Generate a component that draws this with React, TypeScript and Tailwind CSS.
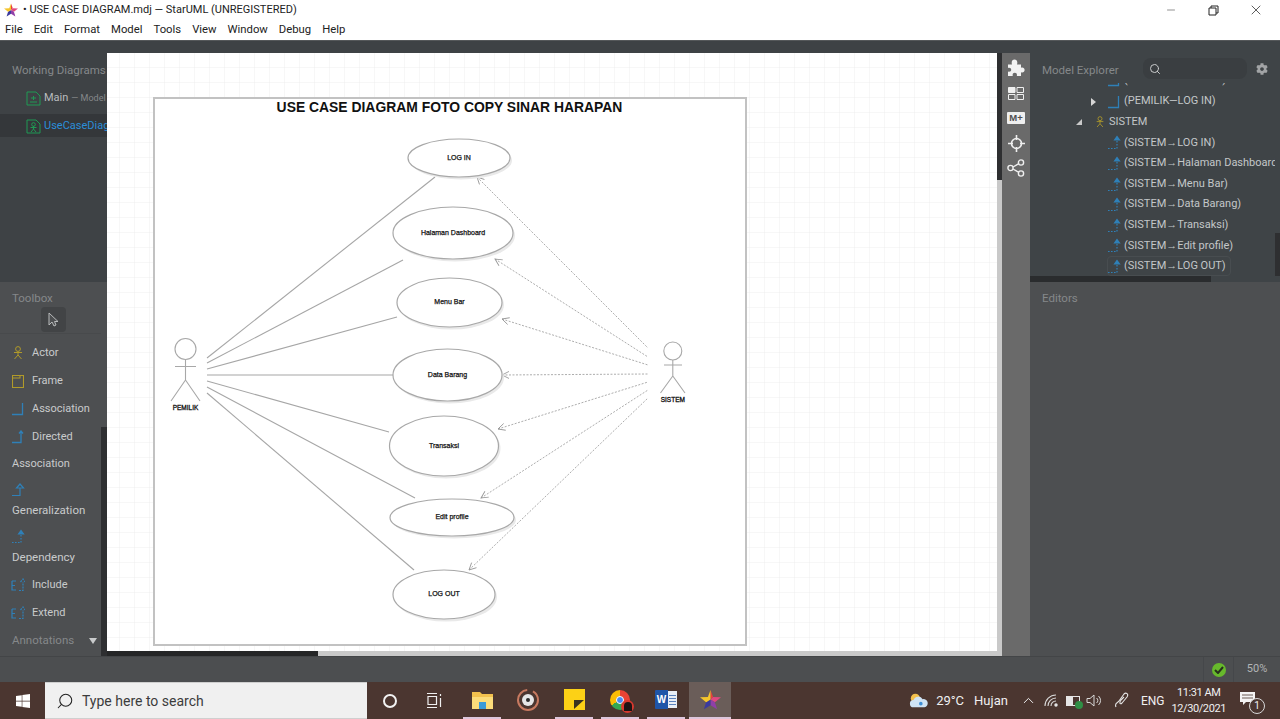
import { ChevronUp, Minus, Search, X } from "lucide-react";
import { FaCog, FaWindows } from "react-icons/fa";

const uiFont = "font-['Roboto','Noto_Sans',sans-serif]";
const panelFont = "font-['Roboto','Noto_Sans',sans-serif]";
const diagramFont = "'Liberation Sans', Arial, sans-serif";

const menuItems = ["File", "Edit", "Format", "Model", "Tools", "View", "Window", "Debug", "Help"];

const useCases = [
  { label: "LOG IN", cx: 459, cy: 158, rx: 51, ry: 19 },
  { label: "Halaman Dashboard", cx: 453, cy: 233, rx: 60, ry: 26 },
  { label: "Menu Bar", cx: 449.5, cy: 302.5, rx: 52.5, ry: 24.5 },
  { label: "Data Barang", cx: 447.5, cy: 375, rx: 54.5, ry: 26 },
  { label: "Transaksi", cx: 444, cy: 446, rx: 54.5, ry: 30 },
  { label: "Edit profile", cx: 452, cy: 517.5, rx: 62, ry: 18.5 },
  { label: "LOG OUT", cx: 444, cy: 594.5, rx: 51, ry: 24.5 },
];

const solidLines = [
  [207, 358, 435, 177],
  [207, 363, 403, 260],
  [207, 369, 397, 317],
  [207, 375, 393, 375],
  [207, 381, 389, 432],
  [207, 387, 415, 498],
  [207, 393, 414, 570],
];

const dashedLines = [
  [648, 348, 477, 177],
  [648, 357, 495, 259],
  [648, 365, 502, 319],
  [648, 374, 502, 375],
  [648, 382, 498, 429],
  [648, 390, 481, 498],
  [648, 398, 469, 570],
];

const sistemRows = [
  "(SISTEM→LOG IN)",
  "(SISTEM→Halaman Dashboard)",
  "(SISTEM→Menu Bar)",
  "(SISTEM→Data Barang)",
  "(SISTEM→Transaksi)",
  "(SISTEM→Edit profile)",
];

const StarLogo = ({ size = 14 }: { size?: number }) => (
  <svg width={size} height={size} viewBox="0 0 24 24" className="shrink-0">
    <path d="M12 1 L15 9 L12 12 Z" fill="#e8413c" />
    <path d="M15 9 L24 9.5 L17 15 L12 12 Z" fill="#e0497f" />
    <path d="M17 15 L19.5 23 L12 18.5 L12 12 Z" fill="#8f3fa8" />
    <path d="M12 18.5 L4.5 23 L7 15 L12 12 Z" fill="#3b3a9e" />
    <path d="M7 15 L0 9.5 L9 9 L12 1 L12 12 Z" fill="#f5c52c" />
  </svg>
);

const ActorIcon = ({ size = 12 }: { size?: number }) => (
  <svg width={size} height={size + 2} viewBox="0 0 12 14" fill="none" stroke="#b09a2a" strokeWidth="1" className="shrink-0">
    <circle cx="6" cy="3" r="2.4" />
    <path d="M2 6.5 H10 M6 5.5 V9 M6 9 L2.5 13 M6 9 L9.5 13" />
  </svg>
);

const AssocIcon = () => (
  <svg width="12" height="14" viewBox="0 0 12 14" fill="none" stroke="#2f80b8" strokeWidth="1.3" className="shrink-0">
    <path d="M0 12.5 H10.5 V1" />
  </svg>
);

const DirectedIcon = () => (
  <svg width="12" height="14" viewBox="0 0 12 14" fill="none" stroke="#2f80b8" strokeWidth="1.3" className="shrink-0">
    <path d="M0 12.5 H9 V1.5 M7 3.5 L9 1 L11 3.5" />
  </svg>
);

const GenIcon = () => (
  <svg width="15" height="14" viewBox="0 0 15 14" fill="none" stroke="#2f80b8" strokeWidth="1.2" className="shrink-0">
    <path d="M0 12.5 H8 V5 M4.5 5 L8 1 L11.5 5 Z" />
  </svg>
);

const DepIcon = () => (
  <svg width="14" height="15" viewBox="0 0 14 15" fill="none" stroke="#2f80b8" strokeWidth="1.2" className="shrink-0">
    <path d="M0 13.5 H9 V5" strokeDasharray="1.6 1.4" />
    <path d="M6.5 5 L9 1.5 L11.5 5 Z" fill="#2f80b8" />
  </svg>
);

const IncludeIcon = () => (
  <svg width="14" height="14" viewBox="0 0 14 14" fill="none" stroke="#2f80b8" strokeWidth="1.2" className="shrink-0">
    <path d="M1 3 H5 M1 3 V12 H5 M1 7.5 H4" />
    <path d="M8 12.5 H12 V4 M9.5 4 L12 1 L14 4" strokeDasharray="2 1" />
  </svg>
);

const TreeRow = ({ text, active }: { text: string; active?: boolean }) => (
  <div className="h-[20.6px] flex items-center pl-[78px]">
    <div className={`flex items-center gap-[2px] pr-1 whitespace-nowrap h-[20px] ${active ? "border border-[#484d50] rounded-sm -ml-px" : ""}`}>
      <DepIcon />
      <span className="text-[11px] text-[#c3c7c9]">{text}</span>
    </div>
  </div>
);

const ToolItem = ({ icon, label }: { icon: React.ReactNode; label: string }) => (
  <div className="h-[28px] flex items-center gap-[8px] pl-3">
    <span className="w-[12px] flex justify-center">{icon}</span>
    <span className="text-[11px] text-[#c9cbcc]">{label}</span>
  </div>
);

const Diagram = () => (
  <svg viewBox="107 53 890 598" className="w-[890px] h-[598px] block bg-white shrink-0">
    <defs>
      <pattern id="grid" x="105" y="53" width="15" height="15" patternUnits="userSpaceOnUse">
        <path d="M15 0 V15 M0 15 H15" stroke="#eeeeee" strokeWidth="1" fill="none" />
      </pattern>
      <marker id="open" markerWidth="9" markerHeight="9" refX="1" refY="4.5" orient="auto">
        <path d="M8 1 L1 4.5 L8 8" fill="none" stroke="#999999" strokeWidth="0.9" />
      </marker>
    </defs>
    <rect x="107" y="53" width="890" height="598" fill="url(#grid)" />
    <rect x="154" y="98" width="592" height="547" fill="#ffffff" stroke="#c2c2c2" strokeWidth="2" />
    <text x="449.5" y="112" textAnchor="middle" fontFamily={diagramFont} fontSize="13.9" fontWeight="700" fill="#111111">
      USE CASE DIAGRAM FOTO COPY SINAR HARAPAN
    </text>

    {solidLines.map(([x1, y1, x2, y2]) => (
      <line key={y1} x1={x1} y1={y1} x2={x2} y2={y2} stroke="#a6a6a6" strokeWidth="1.1" />
    ))}
    {dashedLines.map(([x1, y1, x2, y2]) => (
      <line
        key={y1}
        x1={x2}
        y1={y2}
        x2={x1}
        y2={y1}
        stroke="#adadad"
        strokeWidth="1"
        strokeDasharray="2 1.5"
        markerStart="url(#open)"
      />
    ))}

    {useCases.map((u) => (
      <g key={u.label}>
        <ellipse cx={u.cx + 2} cy={u.cy + 2.5} rx={u.rx} ry={u.ry} fill="#e9e9e9" />
        <ellipse cx={u.cx} cy={u.cy} rx={u.rx} ry={u.ry} fill="#ffffff" stroke="#a8a8a8" strokeWidth="1.2" />
        <text
          x={u.cx}
          y={u.cy + 1.5}
          textAnchor="middle"
          fontFamily={diagramFont}
          fontSize="7"
          fill="#111111"
          stroke="#111111"
          strokeWidth="0.25"
        >
          {u.label}
        </text>
      </g>
    ))}

    <g fill="none" stroke="#a8a8a8" strokeWidth="1.1">
      <circle cx="185.5" cy="349" r="10.5" />
      <path d="M175 366.5 H196 M185.5 359.5 V380 M185.5 380 L171 401 M185.5 380 L200 401" />
      <circle cx="672.8" cy="351" r="9" />
      <path d="M664 365 H682 M672.8 360 V376 M672.8 376 L660.5 393 M672.8 376 L685 393" />
    </g>
    <text x="185.5" y="409.5" textAnchor="middle" fontFamily={diagramFont} fontSize="6.5" fill="#111111" stroke="#111111" strokeWidth="0.3">
      PEMILIK
    </text>
    <text x="672.8" y="401.5" textAnchor="middle" fontFamily={diagramFont} fontSize="6.5" fill="#111111" stroke="#111111" strokeWidth="0.3">
      SISTEM
    </text>
  </svg>
);

const TitleBar = () => (
  <div className={`h-[20px] bg-white flex items-center ${uiFont}`}>
    <div className="pl-[4px] pr-[5px]">
      <StarLogo />
    </div>
    <span className="text-[11px] text-[#222222] whitespace-nowrap">• USE CASE DIAGRAM.mdj — StarUML (UNREGISTERED)</span>
    <div className="ml-auto mr-[2px] flex items-center text-[#222222]">
      <div className="w-[42px] flex justify-center">
        <Minus size={12} strokeWidth={1} />
      </div>
      <div className="w-[42px] flex justify-center">
        <svg width="11" height="11" viewBox="0 0 11 11" fill="none" stroke="#222222">
          <path d="M1 3 H8 V10 H1 Z M3 3 V1 H10 V8 H8" />
        </svg>
      </div>
      <div className="w-[44px] flex justify-center">
        <X size={16} strokeWidth={1.1} />
      </div>
    </div>
  </div>
);

const MenuBar = () => (
  <div className={`h-[20px] bg-white flex items-center gap-[11px] pl-[5px] ${uiFont}`}>
    {menuItems.map((item) => (
      <span key={item} className="text-[11.3px] text-[#222222]">
        {item}
      </span>
    ))}
  </div>
);

const LeftPanel = () => (
  <div className={`w-[107px] flex flex-col shrink-0 overflow-hidden ${panelFont}`}>
    <div className="h-[242px] bg-[#3e4245] border-t border-[#55585a] whitespace-nowrap">
      <div className="pl-3 pt-[21px] text-[11.5px] text-[#85888a] h-[46px]">Working Diagrams</div>
      <div className="h-[27px] pb-[4px] flex items-center gap-[3px] pl-[26px]">
        <svg width="15" height="15" viewBox="0 0 15 15" fill="none" stroke="#1f9a54" strokeWidth="1" className="shrink-0">
          <path d="M1 1 H10 L14 5 V14 H1 Z M4 11 H11 M7.5 5 V9 M5 7 H10" />
        </svg>
        <span className="text-[11px] text-[#b9bcbe]">Main</span>
        <span className="text-[9px] text-[#85888a]">— Model</span>
      </div>
      <div className="h-[23px] pt-px flex items-center gap-[3px] pl-[26px] bg-[#34373a]">
        <svg width="15" height="15" viewBox="0 0 15 15" fill="none" stroke="#1f9a54" strokeWidth="1" className="shrink-0">
          <path d="M1 1 H10 L14 5 V14 H1 Z" />
          <circle cx="7.5" cy="5.5" r="1.8" />
          <path d="M4.5 8.5 H10.5 M7.5 7 V10 L5 13 M7.5 10 L10 13" />
        </svg>
        <span className="text-[11px] text-[#2b8ed8]">UseCaseDiagram</span>
      </div>
    </div>
    <div className="flex-1 bg-[#4d4f51] flex min-h-0">
      <div className="flex-1 min-w-0 whitespace-nowrap">
        <div className="pl-3 pt-[8px] text-[11.5px] text-[#85888a] h-[24px]">Toolbox</div>
        <div className="h-[28px] flex items-center pl-[41px] border-b border-[#484a4c]">
          <div className="w-[25px] h-[25px] rounded bg-[#424446] flex items-center justify-center">
            <svg width="14" height="16" viewBox="0 0 14 16" fill="#4d4f51" stroke="#b8babb" strokeWidth="1">
              <path d="M2 1 V13 L5 10 L7 14 L9 13 L7.5 9.5 H11 Z" />
            </svg>
          </div>
        </div>
        <div className="pt-[5px]">
          <ToolItem icon={<ActorIcon />} label="Actor" />
          <ToolItem
            icon={
              <svg width="12" height="13" viewBox="0 0 12 13" fill="none" stroke="#b09a2a" strokeWidth="1.1">
                <path d="M0.5 0.5 H11.5 V12.5 H0.5 Z M0.5 3 H8 V0.5" />
              </svg>
            }
            label="Frame"
          />
          <ToolItem icon={<AssocIcon />} label="Association" />
          <ToolItem icon={<DirectedIcon />} label="Directed" />
          <div className="h-[26px] pl-3 flex items-center text-[11px] text-[#c9cbcc]">Association</div>
          <div className="h-[20px] pl-3 flex items-end">
            <GenIcon />
          </div>
          <div className="h-[27px] pl-3 flex items-center text-[11.5px] text-[#c9cbcc]">Generalization</div>
          <div className="h-[20px] pl-3 flex items-end">
            <DepIcon />
          </div>
          <div className="h-[27px] pl-3 flex items-center text-[11.5px] text-[#c9cbcc]">Dependency</div>
          <ToolItem icon={<IncludeIcon />} label="Include" />
          <ToolItem icon={<IncludeIcon />} label="Extend" />
          <div className="h-[28px] pl-3 pr-[4px] flex items-center justify-between">
            <span className="text-[11.5px] text-[#85888a]">Annotations</span>
            <span className="w-0 h-0 border-x-[4px] border-x-transparent border-t-[6px] border-t-[#c9cbcc]" />
          </div>
        </div>
      </div>
      <div className="w-[6px] flex flex-col">
        <div className="h-[145px]" />
        <div className="flex-1 bg-[#2e2f31]" />
      </div>
    </div>
  </div>
);

const CenterPane = () => (
  <div className="w-[895px] shrink-0 flex flex-col bg-[#3e4245] border-t border-[#55585a]">
    <div className="h-[12px]" />
    <div className="flex h-[598px]">
      <Diagram />
      <div className="w-[5px] flex flex-col">
        <div className="h-[127px] bg-[#2e2f31]" />
        <div className="flex-1 bg-[#c9c9c9]" />
      </div>
    </div>
    <div className="h-[5px] flex">
      <div className="w-[211px] bg-[#252627]" />
      <div className="flex-1 bg-[#c9c9c9]" />
    </div>
  </div>
);

const SideIcons = () => (
  <div className="w-[28px] shrink-0 flex flex-col bg-[#3e4245] border-t border-[#55585a]">
    <div className="h-[12px]" />
    <div className="flex-1 bg-[#6a6a6a] flex flex-col items-center pt-[5px] gap-[7px] text-[#f2f2f2]">
      <div className="h-[19px] flex items-center">
        <svg width="18" height="18" viewBox="0 0 18 18" fill="#f2f2f2">
          <path d="M1 5.5 H5 C4 2.5 5.5 0.5 7.5 0.5 C9.5 0.5 11 2.5 10 5.5 H14 V8.8 C16 8 17.6 9.2 17.6 11 C17.6 12.8 16 14 14 13.2 V17 H9.8 C10.4 15 9.4 13.8 7.8 13.8 C6.2 13.8 5.2 15 5.8 17 H1 V12.6 C3 13.2 4.2 12.2 4.2 10.8 C4.2 9.4 3 8.4 1 9 Z" />
        </svg>
      </div>
      <div className="h-[18px] flex items-center">
        <svg width="16" height="13" viewBox="0 0 16 13" fill="none" stroke="#efefef">
          <path d="M0.5 0.5 H7 V5.5 H0.5 Z" fill="#efefef" />
          <path d="M9 0.5 H15.5 V5.5 H9 Z M0.5 7.5 H7 V12.5 H0.5 Z M9 7.5 H15.5 V12.5 H9 Z" />
        </svg>
      </div>
      <div className="h-[18px] flex items-center">
        <div className="w-[18px] h-[12px] bg-[#efefef] rounded-[1px] flex items-center justify-center text-[9.5px] font-bold leading-none text-[#4f4f4f] font-['Liberation_Sans',sans-serif]">
          M+
        </div>
      </div>
      <div className="h-[18px] flex items-center">
        <svg width="17" height="17" viewBox="0 0 17 17" fill="none" stroke="#efefef" strokeWidth="1.6">
          <circle cx="8.5" cy="8.5" r="5" />
          <path d="M8.5 0 V5 M8.5 12 V17 M0 8.5 H5 M12 8.5 H17" />
        </svg>
      </div>
      <div className="h-[18px] flex items-center">
        <svg width="18" height="18" viewBox="0 0 18 18" fill="none" stroke="#efefef" strokeWidth="1.4">
          <circle cx="3.5" cy="9" r="2.6" />
          <circle cx="14" cy="3.5" r="2.6" />
          <circle cx="14" cy="14.5" r="2.6" />
          <path d="M6 8 L11.5 4.8 M6 10 L11.5 13.2" />
        </svg>
      </div>
    </div>
  </div>
);

const RightPanel = () => (
  <div className={`flex-1 min-w-0 flex flex-col ${panelFont}`}>
    <div className="h-[242px] bg-[#3f4447] border-t border-[#55585a] flex flex-col">
      <div className="h-[42px] flex items-center pl-3 pt-[17px] pb-[4px] shrink-0">
        <span className="text-[11.5px] text-[#85888a] mt-[5px] w-[101px] whitespace-nowrap">Model Explorer</span>
        <div className="w-[104px] h-[21px] rounded-lg bg-[#3a3e41] pl-[6px] flex items-center">
          <Search size={12} className="text-[#c9cbcc]" />
        </div>
        <FaCog size={12} className="ml-[9px] text-[#a2a4a6]" />
      </div>
      <div className="flex-1 flex min-h-0">
        <div className="flex-1 min-w-0 overflow-hidden">
          <div className="h-[8.4px] overflow-hidden">
            <div className="-mt-[13px] h-[20.6px] flex items-center pl-[78px] gap-1 whitespace-nowrap">
              <AssocIcon />
              <span className="text-[11px] text-[#c3c7c9]">(PEMILIK—LOG OUT)</span>
            </div>
          </div>
          <div className="h-[20.6px] flex items-center pl-[61px] gap-[12px] whitespace-nowrap">
            <span className="w-0 h-0 border-y-[4px] border-y-transparent border-l-[5px] border-l-[#d6d6d6]" />
            <AssocIcon />
            <span className="text-[11px] text-[#c3c7c9] -ml-[8px]">(PEMILIK—LOG IN)</span>
          </div>
          <div className="h-[20.6px] flex items-center pl-[46px] whitespace-nowrap">
            <span className="w-0 h-0 border-b-[6px] border-l-[6px] border-l-transparent border-b-[#c9c9c9]" />
            <span className="ml-[13px]">
              <ActorIcon size={10} />
            </span>
            <span className="text-[11px] text-[#c3c7c9] ml-[4px]">SISTEM</span>
          </div>
          {sistemRows.map((text) => (
            <TreeRow key={text} text={text} />
          ))}
          <TreeRow text="(SISTEM→LOG OUT)" active />
        </div>
        <div className="w-[5px] flex flex-col">
          <div className="h-[150px]" />
          <div className="flex-1 bg-[#2e2f31]" />
        </div>
      </div>
      <div className="h-[6px] flex shrink-0">
        <div className="w-[181px] bg-[#2a2c2e]" />
      </div>
    </div>
    <div className="flex-1 bg-[#4d4f51] pl-3 pt-[8px] text-[11.5px] text-[#85888a]">Editors</div>
  </div>
);

const StatusBar = () => (
  <div className={`h-[26px] bg-[#4c4e50] border-t border-[#434547] flex justify-end ${panelFont}`}>
    <div className="w-[30px] flex items-center justify-center border-l border-[#45474a]">
      <div className="w-[14px] h-[14px] rounded-full bg-[#67b92c] flex items-center justify-center">
        <svg width="10" height="8" viewBox="0 0 10 8" fill="none" stroke="#26301c" strokeWidth="2">
          <path d="M1 4 L4 7 L9 1" />
        </svg>
      </div>
    </div>
    <div className="w-[47px] flex items-center justify-center border-l border-[#45474a] text-[11px] text-[#b3b5b6]">50%</div>
  </div>
);

const TaskSlot = ({
  children,
  on,
  current,
  wide,
}: {
  children: React.ReactNode;
  on?: boolean;
  current?: boolean;
  wide?: boolean;
}) => (
  <div className={`${wide ? "w-[42px]" : "w-[46px]"} h-full flex flex-col items-center ${current ? "bg-[#6a5d59]" : ""}`}>
    <div className="flex-1 flex items-center justify-center">{children}</div>
    <div className={`h-[2px] ${current ? "w-full" : "w-[38px]"} ${on || current ? "bg-[#dcc6dc]" : ""}`} />
  </div>
);

const Taskbar = () => (
  <div className={`h-[37px] bg-[#4b3630] flex items-stretch ${uiFont}`}>
    <div className="w-[45px] flex items-center justify-center text-white">
      <FaWindows size={16} />
    </div>
    <div className="w-[322px] bg-[#f0f0f0] flex items-center pl-[11px] gap-[8px] border-y border-[#cfcfcf]">
      <Search size={18} strokeWidth={1.4} className="text-[#222222] -scale-x-100" />
      <span className="text-[14px] text-[#3c3c3c] mt-px">Type here to search</span>
    </div>
    <div className="w-[45px] flex items-center justify-center">
      <div className="w-[14px] h-[14px] rounded-full border-[2.5px] border-[#f2f2f2] ml-[1px]" />
    </div>
    <div className="w-[45px] flex items-center justify-center">
      <svg width="17" height="15" viewBox="0 0 17 15" fill="none" stroke="#f0f0f0" strokeWidth="1.2">
        <path d="M1 0.5 H11 M1 14.5 H11 M2 3.5 H10.5 V11.5 H2 Z M14.5 1 V3 M14.5 5 V14" />
      </svg>
    </div>
    <div className="w-[2px]" />
    <TaskSlot on>
      <svg width="21" height="20" viewBox="0 0 21 20">
        <path d="M0 2 H8 L10 4 H21 V19 H0 Z" fill="#f2c14e" />
        <path d="M0 7 H21 V19 H0 Z" fill="#fbdc7a" />
        <path d="M7 12 H14 V19 H7 Z" fill="#3a9ad9" />
      </svg>
    </TaskSlot>
    <TaskSlot>
      <svg width="24" height="24" viewBox="0 0 24 24" fill="none">
        <circle cx="12" cy="12" r="10" stroke="#c87a60" strokeWidth="2" strokeDasharray="46 6" />
        <circle cx="12" cy="12" r="6" fill="#e6e6e6" />
        <circle cx="12" cy="12" r="2" fill="#2a2a2a" />
      </svg>
    </TaskSlot>
    <TaskSlot on>
      <svg width="21" height="21" viewBox="0 0 21 21">
        <path d="M0 0 H21 V21 H0 Z" fill="#fcd116" />
        <path d="M10 20 V11 H20 Z" fill="#3a3320" />
      </svg>
    </TaskSlot>
    <TaskSlot on>
      <div className="relative w-[20px] h-[20px]">
        <div className="w-[20px] h-[20px] rounded-full bg-[conic-gradient(#ea4335_0_33%,#34a853_33%_66%,#fbbc05_66%_100%)] flex items-center justify-center">
          <div className="w-[8px] h-[8px] rounded-full bg-[#4a8af4] border border-white" />
        </div>
        <div className="absolute -right-[4px] -bottom-[3px] w-[13px] h-[13px] rounded-full bg-[#d8382e] flex items-center justify-center">
          <div className="w-[8px] h-[9px] rounded-t-full bg-[#1c1414]" />
        </div>
      </div>
    </TaskSlot>
    <TaskSlot on>
      <div className="flex items-center">
        <div className="w-[13px] h-[19px] bg-[#1f55a8] flex items-center justify-center text-[10px] font-bold text-white rounded-l-[1px] z-10 font-['Liberation_Sans',sans-serif]">
          W
        </div>
        <div className="w-[9px] h-[17px] bg-[#e8eef6] flex flex-col justify-center gap-[2px] px-[1px]">
          <div className="h-px bg-[#5a82bd]" />
          <div className="h-px bg-[#5a82bd]" />
          <div className="h-px bg-[#5a82bd]" />
          <div className="h-px bg-[#5a82bd]" />
        </div>
      </div>
    </TaskSlot>
    <TaskSlot current wide>
      <StarLogo size={21} />
    </TaskSlot>
    <div className="flex-1 flex items-center justify-end text-[#f0f0f0] whitespace-nowrap">
      <svg width="20" height="17" viewBox="0 0 22 17" className="mr-[7px]">
        <circle cx="7" cy="6" r="5" fill="#f3c04c" />
        <path d="M5 16 a4 4 0 0 1 0-8 a5.5 5.5 0 0 1 10-1 a4.5 4.5 0 0 1 2 9 Z" fill="#cfe3f5" />
        <circle cx="13" cy="12" r="2" fill="#3f8fd6" />
      </svg>
      <span className="text-[13px] mr-[10px]">29°C</span>
      <span className="text-[13px] mr-[12px]">Hujan</span>
      <ChevronUp size={17} strokeWidth={1.4} className="mr-[7px]" />
      <svg width="15" height="13" viewBox="0 0 15 13" fill="none" stroke="#d8d8d8" strokeWidth="1.1" className="mr-[7px]">
        <path d="M1 12 A11 11 0 0 1 12 1 M4 12 A8 8 0 0 1 12 4 M7 12 A5 5 0 0 1 12 7" />
        <circle cx="12" cy="11" r="1.2" fill="#ffffff" />
      </svg>
      <div className="relative w-[14px] h-[10px] border border-[#e6e6e6] mr-[6px]">
        <div className="w-[6px] h-full bg-[#e6e6e6]" />
        <div className="absolute -right-[4px] -bottom-[4px] w-[8px] h-[8px] rounded-full bg-[#2f8f45]" />
      </div>
      <svg width="16" height="13" viewBox="0 0 16 13" fill="none" stroke="#d8d8d8" strokeWidth="1" className="mr-[12px]">
        <path d="M1 4.5 H4 L8 1 V12 L4 8.5 H1 Z M10.5 4 A3 3 0 0 1 10.5 9 M12.5 2 A6 6 0 0 1 12.5 11" />
      </svg>
      <svg width="16" height="17" viewBox="0 0 16 17" fill="none" stroke="#e6e6e6" strokeWidth="1.1" className="mr-[11px]">
        <path d="M2 15 C0 11 4 11 5 9 L10 2 C12 0 15 2 13 5 L8 11 C6 13 5 11 7 8 L10 5" />
      </svg>
      <span className="text-[12px] mr-[7px]">ENG</span>
      <div className="flex flex-col items-center text-[11px] tracking-[-0.4px] leading-[16px] mr-[14px]">
        <span>11:31 AM</span>
        <span>12/30/2021</span>
      </div>
      <div className="relative w-[18px] h-[18px] mr-[22px]">
        <svg width="15" height="14" viewBox="0 0 15 14">
          <path d="M0 0 H15 V10 H6 L3 13 V10 H0 Z" fill="#f4f4f4" />
          <path d="M2 3 H13 M2 6 H13" stroke="#6a5a55" />
        </svg>
        <div className="absolute -right-[7px] -bottom-[4px] w-[16px] h-[16px] rounded-full bg-[#4b3630] border border-[#d8d8d8] flex items-center justify-center text-[10px] leading-none">
          1
        </div>
      </div>
    </div>
  </div>
);

const App = () => {
  return (
    <div className="w-[1280px] h-[719px] overflow-hidden flex flex-col">
      <TitleBar />
      <MenuBar />
      <div className="flex-1 flex min-h-0">
        <LeftPanel />
        <CenterPane />
        <SideIcons />
        <RightPanel />
      </div>
      <StatusBar />
      <Taskbar />
    </div>
  );
};

export default App;
